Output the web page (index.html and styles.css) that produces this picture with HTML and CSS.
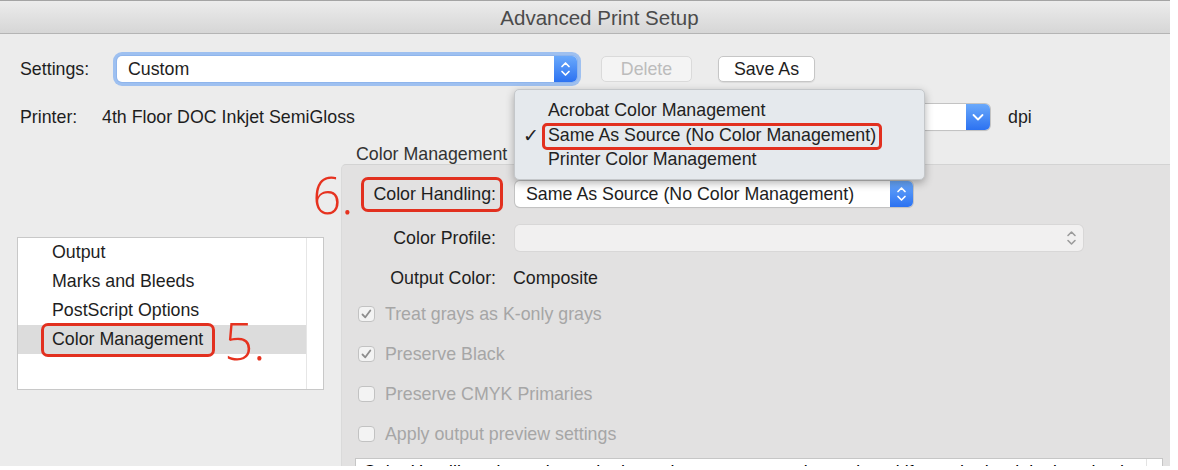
FILE: index.html
```html
<!DOCTYPE html>
<html lang="en">
<head>
  <meta charset="UTF-8">
  <title>Advanced Print Setup</title>
  <link rel="stylesheet" href="styles.css">
</head>
<body>
  <div class="window">
    <div class="titlebar">Advanced Print Setup</div>

    <!-- Settings row -->
    <div class="row settings-row">
      <span class="row-label settings-label">Settings:</span>
      <div class="popup settings-popup">
        <span class="popup-text">Custom</span>
        <span class="stepper">
          <svg width="23" height="26" viewBox="0 0 23 26"><path d="M8 10.5 L11.5 7 L15 10.5 M8 15.5 L11.5 19 L15 15.5" fill="none" stroke="#fff" stroke-width="1.7" stroke-linecap="round" stroke-linejoin="round"/></svg>
        </span>
      </div>
      <button class="btn btn-delete" disabled>Delete</button>
      <button class="btn btn-save">Save As</button>
    </div>

    <!-- Printer row -->
    <div class="row printer-row">
      <span class="row-label printer-label">Printer:</span>
      <span class="printer-name">4th Floor DOC Inkjet SemiGloss</span>
      <div class="popup res-popup">
        <span class="popup-text"></span>
        <span class="stepper">
          <svg width="24" height="26" viewBox="0 0 24 26"><path d="M7.5 11 L12 15.5 L16.5 11" fill="none" stroke="#fff" stroke-width="1.8" stroke-linecap="round" stroke-linejoin="round"/></svg>
        </span>
      </div>
      <span class="unit">dpi</span>
    </div>

    <div class="main">
      <!-- Left category list -->
      <div class="side">
        <div class="list">
          <div class="list-items">
            <div class="list-item">Output</div>
            <div class="list-item">Marks and Bleeds</div>
            <div class="list-item">PostScript Options</div>
            <div class="list-item selected"><span class="annot annot-list">Color Management<span class="step step-5">5.</span></span></div>
          </div>
          <div class="list-scroll"></div>
        </div>
      </div>

      <!-- Color management panel -->
      <div class="content">
        <div class="section-title">Color Management</div>
        <div class="panel">
          <div class="field first">
            <div class="field-label"><span class="annot annot-handling">Color Handling:<span class="step step-6">6.</span></span></div>
            <div class="popup handling-popup">
              <span class="popup-text">Same As Source (No Color Management)</span>
              <span class="stepper">
                <svg width="23" height="26" viewBox="0 0 23 26"><path d="M8 10.5 L11.5 7 L15 10.5 M8 15.5 L11.5 19 L15 15.5" fill="none" stroke="#fff" stroke-width="1.7" stroke-linecap="round" stroke-linejoin="round"/></svg>
              </span>
            </div>
          </div>
          <div class="field profile">
            <div class="field-label">Color Profile:</div>
            <div class="popup popup-disabled profile-popup">
              <span class="popup-text"></span>
              <span class="stepper-plain">
                <svg width="23" height="26" viewBox="0 0 23 26"><path d="M8 10.5 L11.5 7 L15 10.5 M8 15.5 L11.5 19 L15 15.5" fill="none" stroke="#9c9c9c" stroke-width="1.6" stroke-linecap="round" stroke-linejoin="round"/></svg>
              </span>
            </div>
          </div>
          <div class="field output">
            <div class="field-label">Output Color:</div>
            <div class="field-value">Composite</div>
          </div>

          <div class="check first-check">
            <span class="box"><svg width="17" height="16" viewBox="0 0 17 16"><path d="M4.5 8.5 L7.3 11.3 L12.3 4.5" fill="none" stroke="#8e8e8e" stroke-width="1.8" stroke-linecap="round" stroke-linejoin="round"/></svg></span>
            <span>Treat grays as K-only grays</span>
          </div>
          <div class="check">
            <span class="box"><svg width="17" height="16" viewBox="0 0 17 16"><path d="M4.5 8.5 L7.3 11.3 L12.3 4.5" fill="none" stroke="#8e8e8e" stroke-width="1.8" stroke-linecap="round" stroke-linejoin="round"/></svg></span>
            <span>Preserve Black</span>
          </div>
          <div class="check">
            <span class="box"></span>
            <span>Preserve CMYK Primaries</span>
          </div>
          <div class="check">
            <span class="box"></span>
            <span>Apply output preview settings</span>
          </div>

          <div class="description">
            <p>Color Handling: determines whether color management is used, and if so, whether it is done by the application or by the printer.</p>
            <div class="desc-scroll"></div>
          </div>
        </div>
      </div>
    </div>

    <!-- Open Color Handling menu -->
    <div class="menu">
      <div class="menu-item">Acrobat Color Management</div>
      <div class="menu-item checked"><span class="tick">✓</span><span class="annot annot-menu">Same As Source (No Color Management)</span></div>
      <div class="menu-item">Printer Color Management</div>
    </div>
  </div>
</body>
</html>
```

FILE: styles.css
```css
/* Reset */
* {
  margin: 0;
  padding: 0;
  box-sizing: border-box;
}
body {
  background: #fff;
  font-family: "Liberation Sans", Arial, sans-serif;
  font-size: 17.8px;
  color: #1e1e1e;
}
.window {
  position: relative;
  width: 1170px;
  height: 466px;
  background: #ececec;
  overflow: hidden;
}
/* Title bar */
.titlebar {
  height: 34px;
  padding-left: 29px;
  border-top: 1px solid #a4a4a4;
  border-bottom: 1px solid #b4b4b4;
  background: linear-gradient(#ececec, #d6d6d6);
  text-align: center;
  font-size: 20.5px;
  line-height: 33px;
  color: #4b4b4b;
}
/* Top rows */
.row {
  display: flex;
  align-items: center;
  padding-left: 20px;
}
.settings-row {
  height: 34px;
  margin-top: 18px;
}
.printer-row {
  height: 26px;
  margin-top: 18px;
}
.settings-label {
  width: 97px;
}
.printer-label {
  width: 82px;
}
.printer-name {
  width: 658px;
}
.unit {
  margin-left: 18px;
}
/* Popup buttons */
.popup {
  display: flex;
  align-items: center;
  height: 26px;
  background: #fff;
  border-radius: 5px;
  box-shadow: 0 0 0 1px #c3c3c3, 0 1px 1px rgba(0,0,0,0.15);
}
.popup-text {
  flex: 1;
  padding-left: 11px;
  white-space: nowrap;
  overflow: hidden;
}
.stepper {
  display: flex;
  width: 23px;
  height: 26px;
  border-radius: 0 5px 5px 0;
  background: linear-gradient(#6aa9fb, #2c72f1);
}
.res-popup .stepper {
  width: 24px;
}
.stepper-plain {
  display: flex;
  width: 23px;
  height: 26px;
}
.settings-popup {
  width: 460px;
  box-shadow: 0 0 0 1px #8fb5ec, 0 0 0 4px #9ec0f0;
}
.res-popup {
  width: 230px;
}
.popup-disabled {
  background: #f1f0f0;
  box-shadow: 0 0 0 1px #d8d7d7;
}
/* Push buttons */
.btn {
  height: 26px;
  border-radius: 5px;
  font: inherit;
  color: #1e1e1e;
  background: #fff;
  border: 1px solid #c6c6c6;
  box-shadow: 0 1px 1px rgba(0,0,0,0.08);
}
.btn-delete {
  width: 91px;
  margin-left: 24px;
  color: #bcbcbc;
  background: #f4f4f4;
  border-color: #dadada;
  box-shadow: none;
}
.btn-save {
  width: 97px;
  margin-left: 26px;
}
/* Main area */
.main {
  display: flex;
  height: 336px;
}
.side {
  flex-shrink: 0;
  width: 341px;
}
.list {
  display: flex;
  width: 307px;
  height: 153px;
  margin: 107px 0 0 17px;
  background: #fff;
  border: 1px solid #c8c8c8;
}
.list-items {
  flex: 1;
}
.list-item {
  height: 29px;
  line-height: 29px;
  padding-left: 34px;
}
.list-item.selected {
  background: #dcdcdc;
}
.list-scroll {
  width: 17px;
  border-left: 1px solid #e6e6e6;
}
.content {
  flex: 1;
  min-width: 0;
  display: flex;
  flex-direction: column;
}
.section-title {
  margin-top: 14px;
  padding-left: 15px;
  line-height: 20px;
  color: #333;
}
.panel {
  flex: 1;
  background: #e2e1e1;
  border-top: 1px solid #d3d3d3;
  border-left: 1px solid #dadada;
  border-top-left-radius: 5px;
  padding-top: 16px;
}
.field {
  display: grid;
  grid-template-columns: 154px 1fr;
  column-gap: 19px;
  align-items: center;
  height: 26px;
}
.field-label {
  display: flex;
  justify-content: flex-end;
  line-height: 26px;
}
.field.profile {
  margin-top: 18px;
}
.field.output {
  margin-top: 14px;
}
.field-value {
  margin-left: -2px;
}
.handling-popup {
  width: 398px;
}
.profile-popup {
  width: 568px;
}
/* Checkboxes */
.check {
  display: flex;
  align-items: center;
  gap: 10px;
  height: 24px;
  margin-top: 16px;
  padding-left: 16px;
  color: #a6a6a6;
}
.check.first-check {
  margin-top: 11px;
}
.box {
  display: flex;
  width: 17px;
  height: 16px;
  border: 1px solid #c2c2c2;
  border-radius: 4px;
  background: #f3f3f3;
}
.box svg {
  margin: -1px;
}
/* Description box at the bottom */
.description {
  display: flex;
  height: 60px;
  margin: 12px 7px 0 13px;
  background: #fff;
  border: 1px solid #c6c6c6;
}
.description p {
  flex: 1;
  padding: 3px 0 0 7px;
  line-height: 20px;
  color: #000;
  white-space: nowrap;
  overflow: hidden;
}
.desc-scroll {
  width: 16px;
  border-left: 1px solid #e3e3e3;
}
/* Menu overlay */
.menu {
  position: absolute;
  left: 514px;
  top: 89px;
  width: 411px;
  padding: 8px 0 7px;
  background: #e5e9ed;
  border: 1px solid #c4c7ca;
  border-radius: 5px;
  box-shadow: 0 3px 8px rgba(0,0,0,0.3);
}
.menu-item {
  position: relative;
  height: 24.5px;
  line-height: 24.5px;
  padding-left: 33px;
  color: #222;
}
.tick {
  position: absolute;
  left: 8px;
  top: 0;
  font-family: "DejaVu Sans", sans-serif;
  font-size: 19px;
  font-weight: bold;
}
/* Red annotations */
.annot {
  position: relative;
  display: inline-block;
}
.annot::after {
  content: "";
  position: absolute;
  border: 3px solid #e2301f;
  border-radius: 7px;
}
.annot-list::after {
  top: -2px;
  bottom: -3px;
  left: -11px;
  right: -12px;
}
.annot-handling::after {
  top: -4px;
  bottom: -5px;
  left: -12px;
  right: -7px;
}
.annot-menu {
  line-height: 24px;
}
.annot-menu::after {
  top: 0;
  bottom: -3px;
  left: -6px;
  right: -6px;
  border-radius: 5px;
}
.step {
  position: absolute;
  font-family: "Open Sans", "Liberation Sans", sans-serif;
  font-weight: 300;
  font-size: 51px;
  line-height: 51px;
  color: #e6321f;
}
.step-5 {
  left: 100%;
  top: -10px;
  margin-left: 21px;
}
.step-6 {
  right: 100%;
  top: -12px;
  margin-right: 20px;
}
```
